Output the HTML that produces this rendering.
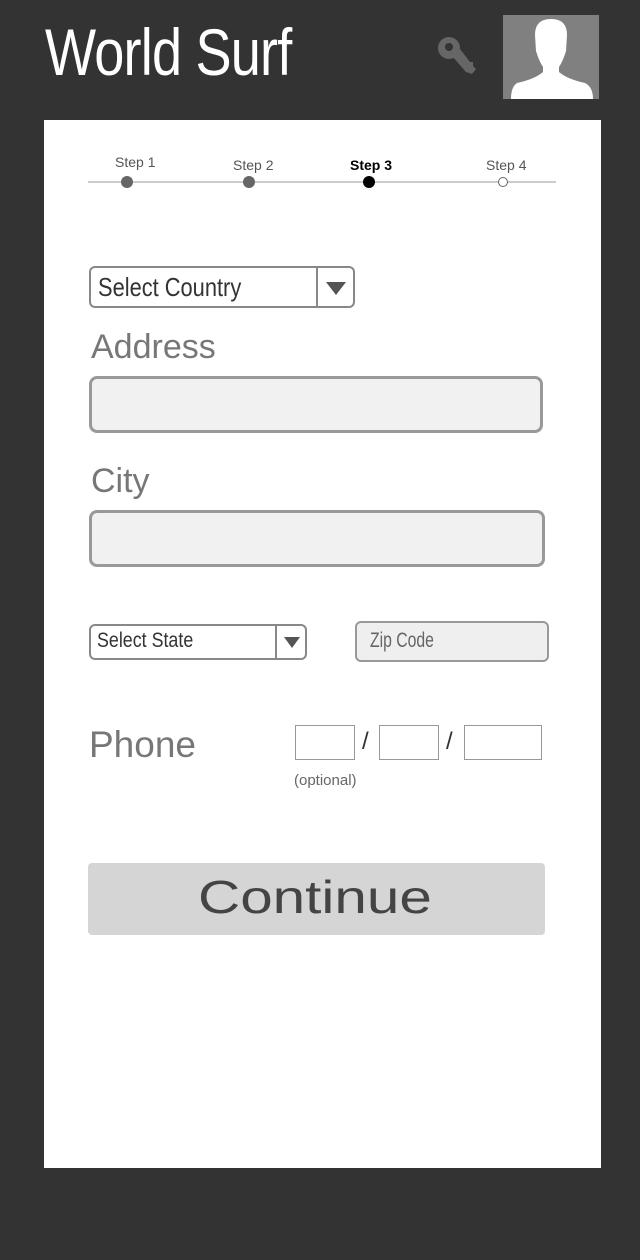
<!DOCTYPE html>
<html><head><meta charset="utf-8"><style>
*{margin:0;padding:0;box-sizing:border-box}
body{width:640px;height:1260px;background:#333;position:relative;font-family:"Liberation Sans",sans-serif;overflow:hidden}
.a{position:absolute}
.title{left:45px;top:14px;color:#fff;font-size:66px;font-weight:normal;letter-spacing:-1px;transform:scaleX(0.82);transform-origin:left;white-space:nowrap}
.panel{left:44px;top:120px;width:557px;height:1048px;background:#fff}
.step{font-size:14px;color:#555}
.dot{width:12px;height:12px;border-radius:50%;background:#666}
.lbl{color:#777;font-size:34px}
.inp{background:#f1f1f1;border:3px solid #999;border-radius:8px}
.sel{border:2px solid #888;border-radius:6px;background:#fff;color:#333}
.box{border:1.5px solid #999;background:#fff}
.n{display:inline-block;transform-origin:left;white-space:nowrap}
</style></head><body>
<div class="a title">World Surf</div>
<svg class="a" style="left:436px;top:34px" width="44" height="42" viewBox="0 0 44 42"><circle cx="13" cy="14" r="11" fill="#666"/><circle cx="13" cy="13" r="4" fill="#333"/><path d="M16 22 L30 38 L36 40 L40 35 L37 32 L37 28 L34 28 L24 15 Z" fill="#666"/></svg>
<div class="a" style="left:503px;top:15px;width:96px;height:84px;background:#808080;overflow:hidden">
<svg width="96" height="84" viewBox="0 0 96 84"><path d="M32 20 Q32 4 48 4 Q64 4 64 20 L63 36 Q60 46 56 52 L56 57 Q64 64 82 68 Q90 72 90 84 L8 84 Q8 72 14 68 Q32 64 40 57 L40 52 Q36 46 33 36 Z" fill="#fff"/></svg></div>
<div class="a panel"></div>
<div class="a" style="left:88px;top:181px;width:468px;height:2px;background:#ccc"></div>
<div class="a step" style="left:115px;top:154px">Step 1</div>
<div class="a step" style="left:233px;top:157px">Step 2</div>
<div class="a step" style="left:350px;top:157px;color:#000;font-weight:bold">Step 3</div>
<div class="a step" style="left:486px;top:157px">Step 4</div>
<div class="a dot" style="left:121px;top:176px"></div>
<div class="a dot" style="left:243px;top:176px"></div>
<div class="a dot" style="left:363px;top:176px;background:#000"></div>
<div class="a dot" style="left:498px;top:177px;width:10px;height:10px;background:#fff;border:1px solid #666"></div>
<div class="a sel" style="left:89px;top:266px;width:266px;height:42px;font-size:26px;padding:4px 7px"><span class="n" style="transform:scaleX(0.84)">Select Country</span>
<div class="a" style="right:0;top:0;width:37px;height:38px;border-left:2px solid #888"><div class="a" style="left:8px;top:14px;border-left:10px solid transparent;border-right:10px solid transparent;border-top:13px solid #555"></div></div></div>
<div class="a lbl" style="left:91px;top:328px">Address</div>
<div class="a inp" style="left:89px;top:376px;width:454px;height:57px"></div>
<div class="a lbl" style="left:91px;top:462px">City</div>
<div class="a inp" style="left:89px;top:510px;width:456px;height:57px"></div>
<div class="a sel" style="left:89px;top:624px;width:218px;height:36px;font-size:21px;padding:3px 6px"><span class="n" style="transform:scaleX(0.85)">Select State</span>
<div class="a" style="right:0;top:0;width:30px;height:32px;border-left:2px solid #888"><div class="a" style="left:7px;top:11px;border-left:8px solid transparent;border-right:8px solid transparent;border-top:11px solid #555"></div></div></div>
<div class="a" style="left:355px;top:621px;width:194px;height:41px;background:#efefef;border:2px solid #999;border-radius:6px;color:#666;font-size:21px;padding:6px 13px"><span class="n" style="transform:scaleX(0.75)">Zip Code</span></div>
<div class="a lbl" style="left:89px;top:724px;font-size:37px">Phone</div>
<div class="a box" style="left:295px;top:725px;width:60px;height:35px"></div>
<div class="a" style="left:362px;top:728px;font-size:24px;color:#333">/</div>
<div class="a box" style="left:379px;top:725px;width:60px;height:35px"></div>
<div class="a" style="left:446px;top:728px;font-size:24px;color:#333">/</div>
<div class="a box" style="left:464px;top:725px;width:78px;height:35px"></div>
<div class="a" style="left:294px;top:772px;font-size:15px;color:#666">(optional)</div>
<div class="a" style="left:88px;top:863px;width:457px;height:72px;background:#d5d5d5;border-radius:4px"></div>
<div class="a" style="left:198px;top:867px;font-size:46px;line-height:60px;color:#444;transform:scaleX(1.27);transform-origin:left;white-space:nowrap">Continue</div>
</body></html>
